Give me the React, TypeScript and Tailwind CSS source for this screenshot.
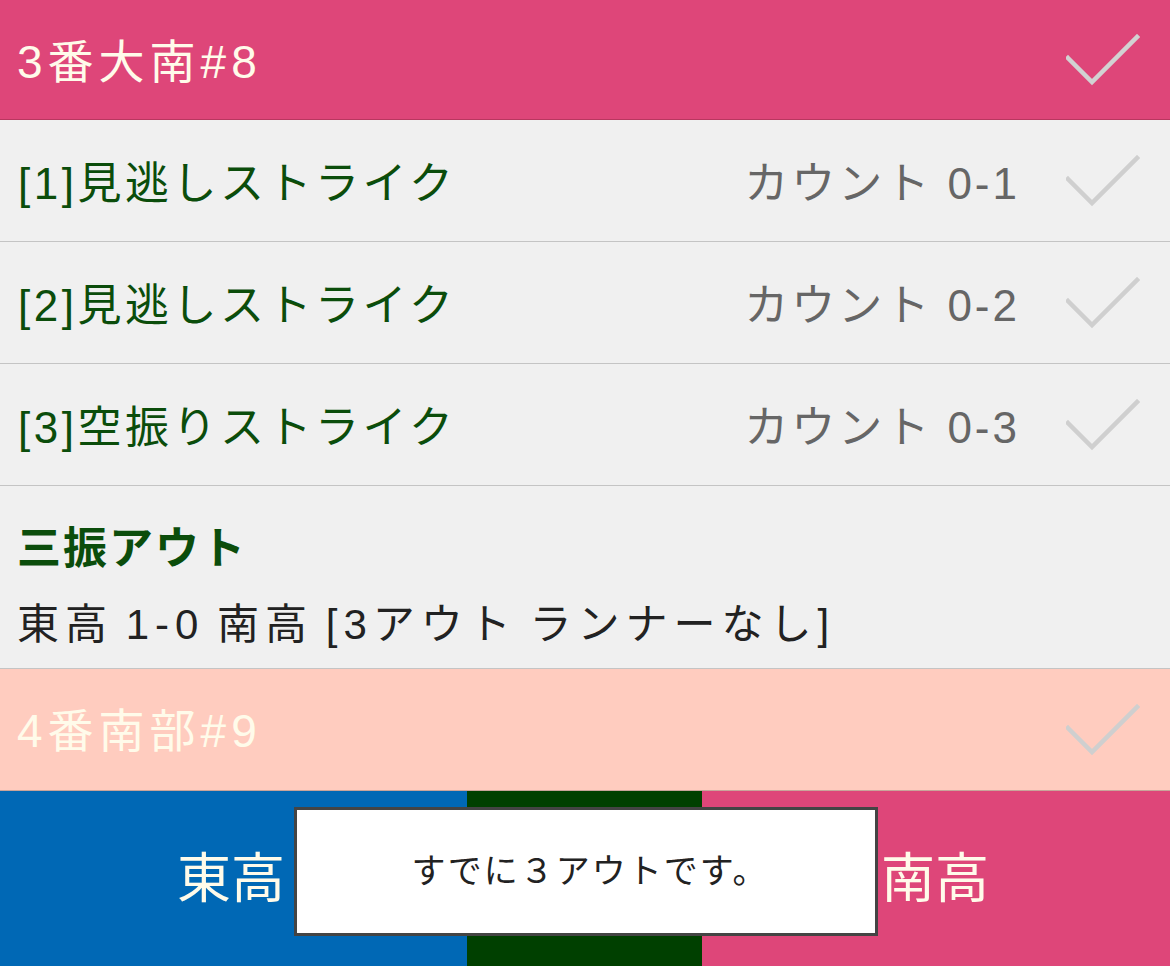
import React from "react";

const font = { fontFamily: '"Liberation Sans", "Noto Sans CJK JP", sans-serif' };

function Check({ color }: { color: string }) {
  return (
    <svg width="74" height="52" viewBox="0 0 74 52" className="shrink-0">
      <polyline points="2,24 26,48 71,3" fill="none" stroke={color} strokeWidth="4.5" strokeLinecap="square" />
    </svg>
  );
}

function Pitch({ label, count }: { label: string; count: string }) {
  return (
    <div className="flex h-[122px] items-center border-b border-[#c4c4c4] bg-[#f0f0f0] pl-[18px] pr-[30px]">
      <div className="flex-1 pt-[6px] text-[44px] leading-[60px] tracking-[3.5px] text-[#0b4d0b]">{label}</div>
      <div className="mr-[46px] pt-[6px] text-[44px] leading-[60px] tracking-[3px] text-[#666666]">{count}</div>
      <Check color="#cfcfcf" />
    </div>
  );
}

export default function App() {
  return (
    <div className="relative h-[966px] w-[1170px] overflow-hidden bg-[#f0f0f0]" style={font}>
      <div className="flex h-[120px] items-center border-b border-[#b8375f] bg-[#de4679] pl-[17px] pr-[30px]">
        <div className="flex-1 pt-[4px] text-[46px] leading-[60px] tracking-[5px] text-[#fffbea]">3番大南#8</div>
        <Check color="#d2d2d2" />
      </div>
      <Pitch label="[1]見逃しストライク" count="カウント 0-1" />
      <Pitch label="[2]見逃しストライク" count="カウント 0-2" />
      <Pitch label="[3]空振りストライク" count="カウント 0-3" />
      <div className="flex h-[183px] flex-col justify-center border-b border-[#c4c4c4] bg-[#f0f0f0] pl-[17px] pt-[18px]">
        <div className="text-[44px] font-bold leading-[64px] tracking-[2px] text-[#0b4d0b]">三振アウト</div>
        <div className="mt-[14px] text-[42px] leading-[60px] tracking-[6px] text-[#222222] [word-spacing:-5px]">東高 1-0 南高 [3アウト ランナーなし]</div>
      </div>
      <div className="flex h-[122px] items-center border-b border-[#c9a49a] bg-[#ffccbf] pl-[17px] pr-[30px]">
        <div className="flex-1 pt-[2px] text-[46px] leading-[60px] tracking-[5px] text-[#fffbea]">4番南部#9</div>
        <Check color="#cfcfcf" />
      </div>
      <div className="flex h-[176px]">
        <div className="flex w-[467px] items-center justify-end bg-[#0068b5] pr-[182px] text-[54px] text-[#fffbea]">東高</div>
        <div className="w-[235px] bg-[#004000]" />
        <div className="flex flex-1 items-center bg-[#de4679] pl-[179px] text-[54px] text-[#fffbea]">南高</div>
      </div>
      <div className="absolute left-[294px] top-[807px] flex h-[129px] w-[584px] items-center justify-center border-[3px] border-[#444444] bg-white pl-[8px] text-[34px] tracking-[2px] text-[#222222]">
        すでに３アウトです。
      </div>
    </div>
  );
}
